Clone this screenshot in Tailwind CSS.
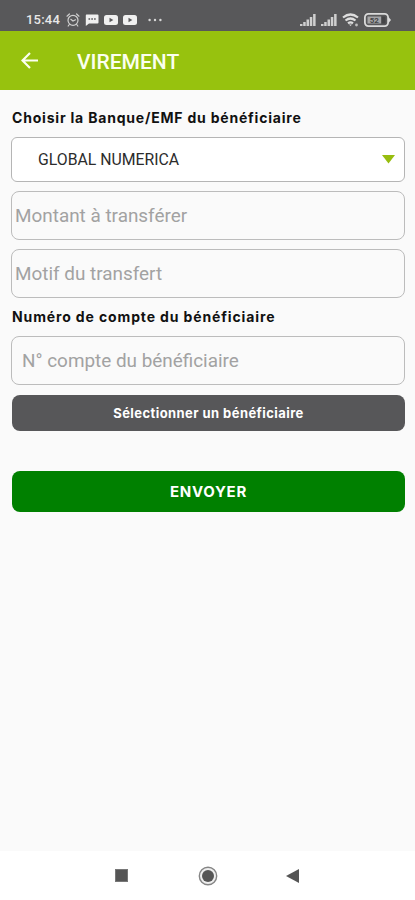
<!DOCTYPE html>
<html lang="fr">
<head>
<meta charset="utf-8">
<meta name="viewport" content="width=device-width, initial-scale=1">
<title>Virement</title>
<script src="https://cdn.jsdelivr.net/npm/@tailwindcss/browser@4"></script>
</head>
<body class="h-[900px] w-[415px] overflow-hidden bg-[#fafafa] font-['Roboto',sans-serif]">
<div class="flex h-full flex-col">
  <div class="flex h-[31px] shrink-0 items-center bg-[#58585a] pt-2 pr-[24px] pl-[26px] text-[#e8e8e8]">
    <span class="w-[34px] text-[13px] leading-none font-medium whitespace-nowrap tracking-[0.2px]">15:44</span>
    <svg class="ml-[6px]" width="14" height="14" viewBox="0 0 14 14" fill="none" stroke="#d0d0d0" stroke-width="1.2" stroke-linecap="round"><circle cx="7" cy="7.3" r="5"/><path d="M1 3.2 3.4 1M13 3.2 10.6 1M3.3 11.5 2.2 13M10.7 11.5 11.8 13M4.800 6.300 7 8l2.500-1.200"/></svg>
    <svg class="ml-[5px]" width="14" height="12" viewBox="0 0 14 12"><path d="M1.500.5h11q1 0 1 1v7q0 1-1 1H4L.8 12V1.500q0-1 .7-1z" fill="#f0f0f0"/><path d="M3.500 5h1.600M6.300 5h1.600M9.100 5h1.600" stroke="#58585a" stroke-width="1.500"/></svg>
    <svg class="ml-[5px]" width="14" height="10" viewBox="0 0 14 10"><rect width="14" height="10" rx="2.500" fill="#f0f0f0"/><path d="M5.500 2.800 9.300 5 5.500 7.200z" fill="#58585a"/></svg>
    <svg class="ml-[5px]" width="14" height="10" viewBox="0 0 14 10"><rect width="14" height="10" rx="2.500" fill="#f0f0f0"/><path d="M5.500 2.800 9.300 5 5.500 7.200z" fill="#58585a"/></svg>
    <svg class="ml-[11px]" width="14" height="4" viewBox="0 0 14 4" fill="#d8d8d8"><circle cx="1.600" cy="2" r="1.200"/><circle cx="7" cy="2" r="1.200"/><circle cx="12.400" cy="2" r="1.200"/></svg>
    <div class="ml-auto flex items-center">
      <svg width="16" height="12" viewBox="0 0 16 12" fill="#cfcfcf"><path d="M0 10h2.500v2H0zM3.200 8h2.500v4H3.200zM6.500 5.500H9V12H6.500zM9.800 3h2.500v9H9.800zM13.100 0h2.500v12h-2.500z"/></svg>
      <svg class="ml-[5px]" width="16" height="12" viewBox="0 0 16 12" fill="#cfcfcf"><path d="M0 10h2.500v2H0zM3.200 8h2.500v4H3.200zM6.500 5.500H9V12H6.500zM9.800 3h2.500v9H9.800zM13.100 0h2.500v12h-2.500z"/></svg>
      <svg class="ml-[5px]" width="17" height="14" viewBox="0 0 17 14" fill="none" stroke="#dedede" stroke-width="2.200"><path d="M1 4.500q7.500-6 15 0M3.500 7.500q5-4 10 0M6 10.300q2.500-2 5 0"/><path d="M7 11.500h3L8.500 13z" fill="#dedede" stroke="none"/><circle cx="14.500" cy="12" r="1.400" fill="#bdbdbd" stroke="none"/></svg>
      <svg class="ml-[5px]" width="27" height="14" viewBox="0 0 27 14"><rect x=".9" y=".9" width="23.200" height="12.200" rx="3.500" fill="none" stroke="#dadada" stroke-width="1.800"/><rect x="3.500" y="3.500" width="13.500" height="7" fill="#a5a5a7"/><path d="M25 4.500 27 7l-2 2.500z" fill="#dadada"/><rect x="18" y="3.500" width="3.500" height="7" fill="#454547"/><text x="10.300" y="10" text-anchor="middle" font-family="Roboto, sans-serif" font-size="8" font-weight="700" fill="#454547">52</text></svg>
    </div>
  </div>
  <header class="flex h-[59px] shrink-0 items-center bg-[#97c20e] pl-[21px] text-[#fbfff0]">
    <svg width="17" height="17" viewBox="0 0 17 17" fill="none" stroke="currentColor" stroke-width="2.200"><path d="M17 8.500H1.600M9 1 1.500 8.500 9 16"/></svg>
    <h1 class="ml-[39px] pt-[3px] text-[21px] leading-none font-medium">VIREMENT</h1>
  </header>
  <main class="flex grow flex-col pt-[19px] pr-[10px] pl-[11px]">
    <h2 class="h-[28px] pl-px font-['Inter',sans-serif] text-[14px] leading-[18px] font-bold tracking-[0.8px] whitespace-nowrap text-[#111]">Choisir la Banque/EMF du bénéficiaire</h2>
    <div class="flex h-[45px] items-center justify-between rounded-[6px] border-[1.5px] border-[#b5b5b5] bg-white pr-[9px] pl-[26px] text-[15.800px] text-[#2c2c2c]">
      <span>GLOBAL NUMERICA</span>
      <svg width="13" height="9" viewBox="0 0 13 9"><path d="M0 0h13L6.500 8.500z" fill="#97bd0e"/></svg>
    </div>
    <div class="mt-[9px] flex h-[49px] items-center rounded-[8px] border-[1.5px] border-[#bcbcbc] pt-[2px] pl-[3px] text-[18.900px] text-[#a2a2a2]"><span>Montant à transférer</span></div>
    <div class="mt-[9px] flex h-[49px] items-center rounded-[8px] border-[1.5px] border-[#bcbcbc] pt-[2px] pl-[3px] text-[18.900px] text-[#a2a2a2]"><span>Motif du transfert</span></div>
    <h2 class="mt-[10px] h-[28px] pl-px font-['Inter',sans-serif] text-[14px] leading-[18px] font-bold tracking-[0.87px] whitespace-nowrap text-[#111]">Numéro de compte du bénéficiaire</h2>
    <div class="flex h-[49px] items-center rounded-[8px] border-[1.5px] border-[#bcbcbc] pt-[2px] pl-[10px] text-[18.900px] text-[#a2a2a2]"><span>N° compte du bénéficiaire</span></div>
    <button class="mt-[10px] ml-px h-[36px] rounded-[8px] bg-[#575759] pt-[2px] font-['Inter',sans-serif] text-[13px] font-bold tracking-[0.43px] text-white"><span>Sélectionner un bénéficiaire</span></button>
    <button class="mt-[40px] ml-px h-[41px] rounded-[8px] bg-[#008000] pt-[2px] font-['Inter',sans-serif] text-[15px] font-bold tracking-[0.7px] text-white"><span>ENVOYER</span></button>
  </main>
  <nav class="flex h-[49px] shrink-0 items-center bg-white pl-[115px]">
    <svg width="13" height="13" viewBox="0 0 13 13"><rect x=".5" y=".5" width="12" height="12" fill="#555" stroke="#777"/></svg>
    <svg class="ml-[70px]" width="20" height="20" viewBox="0 0 20 20"><circle cx="10" cy="10" r="8.700" fill="#eee" stroke="#858585" stroke-width="1.400"/><circle cx="10" cy="10" r="6" fill="#555"/></svg>
    <svg class="ml-[68px]" width="13" height="14" viewBox="0 0 13 14"><path d="M13 0v14L0 7z" fill="#555"/></svg>
  </nav>
</div>
</body>
</html>
